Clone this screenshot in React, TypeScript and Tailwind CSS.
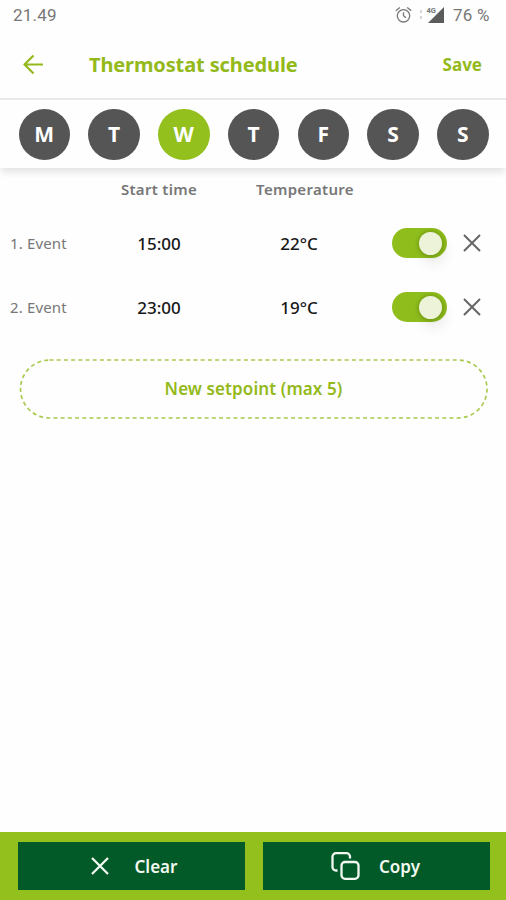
import { useState } from 'react'

interface ScheduleEvent {
  id: number
  time: string
  temperature: string
  enabled: boolean
}

const days = ['M', 'T', 'W', 'T', 'F', 'S', 'S']

const initialEvents: ScheduleEvent[] = [
  { id: 1, time: '15:00', temperature: '22°C', enabled: true },
  { id: 2, time: '23:00', temperature: '19°C', enabled: true }
]

function CrossIcon({ className }: { className: string }) {
  return (
    <svg viewBox="0 0 18 18" fill="none" stroke="currentColor" className={className}>
      <path d="M1 1L17 17M17 1L1 17" />
    </svg>
  )
}

function StatusBar() {
  return (
    <div className="flex h-[30px] shrink-0 items-center justify-between pl-[13px] pr-4 font-[Roboto,sans-serif] text-[17px] leading-[30px] text-[#777777]">
      <span className="tracking-[0.2px]">21.49</span>
      <div className="flex items-center">
        <svg width="18" height="18" viewBox="0 0 18 18" fill="none" stroke="#777777" strokeWidth="1.3">
          <circle cx="8.5" cy="9.8" r="6.2" />
          <path d="M8.5 6.3V9.8L11 11.8M0.8 4.8L4.8 1.5M16.2 4.8L12.2 1.5" />
        </svg>
        <svg width="25" height="18" viewBox="0 0 25 18" className="ml-[6px]">
          <path d="M25 1V17H9Z" fill="#5c5c5c" />
          <path d="M2 4V7M2 10V13" stroke="#cccccc" strokeWidth="1.6" />
          <text x="7.5" y="7" fontSize="7.5" fontWeight="bold" fill="#777777">4G</text>
        </svg>
        <span className="ml-[9px] w-[37px] whitespace-nowrap tracking-[0.2px]">76 %</span>
      </div>
    </div>
  )
}

function Toggle({ enabled, onClick }: { enabled: boolean; onClick: () => void }) {
  return (
    <button
      onClick={onClick}
      aria-label="Toggle event"
      className={`flex h-[30px] w-[55px] items-center rounded-full px-[5px] ${enabled ? 'justify-end bg-[#8fbe1c]' : 'justify-start bg-gray-400'}`}
    >
      <span className="h-[23px] w-[23px] rounded-full bg-[#edf3d9] shadow-[0_0_3px_2px_rgba(70,100,0,0.25),3px_8px_14px_rgba(0,0,0,0.09)]" />
    </button>
  )
}

export default function App() {
  const [selectedDay, setSelectedDay] = useState(2)
  const [events, setEvents] = useState(initialEvents)

  const toggleEvent = (id: number) => {
    setEvents(events.map((e) => (e.id === id ? { ...e, enabled: !e.enabled } : e)))
  }

  const removeEvent = (id: number) => {
    setEvents(events.filter((e) => e.id !== id))
  }

  return (
    <div className="flex h-[900px] w-[506px] flex-col overflow-hidden bg-[#fefefe] font-['Noto_Sans',sans-serif]">
      <StatusBar />

      <header className="flex h-[68px] shrink-0 items-center pl-[23px] pr-6 pt-0.5 text-[#93b91a]">
        <svg width="20" height="20" viewBox="0 0 20 20" fill="none" stroke="currentColor" strokeWidth="2.2">
          <path d="M20 9.5H1.5M10.5 0.5L1.5 9.5L10.5 18.5" />
        </svg>
        <h1 className="ml-[46px] text-[20px] font-bold tracking-[-0.12px]">Thermostat schedule</h1>
        <button className="ml-auto text-[17px] font-bold">Save</button>
      </header>

      <div className="flex h-[70px] shrink-0 items-center justify-between border-t-2 border-[#e9e9e9] pl-[18.5px] pr-[17.5px] pt-px shadow-[0_5px_7px_-1px_rgba(0,0,0,0.11)]">
        {days.map((day, i) => (
          <button
            key={i}
            onClick={() => setSelectedDay(i)}
            className={`h-[51.5px] w-[51.5px] rounded-full pt-px text-[21px] font-bold text-white ${i === selectedDay ? 'bg-[#93c01c]' : 'bg-[#555555]'}`}
          >
            {day}
          </button>
        ))}
      </div>

      <div className="grid h-[43px] shrink-0 grid-cols-[89px_140px_152px_1fr] items-center text-center text-[15px] font-semibold tracking-[0.3px] text-[#777777]">
        <span />
        <span>Start time</span>
        <span>Temperature</span>
      </div>

      {events.map((event, i) => (
        <div key={event.id} className="grid h-16 shrink-0 grid-cols-[89px_140px_140px_23px_68px_1fr] items-center text-[17px] text-[#181818]">
          <span className="pl-[10px] text-[15px] tracking-[0.15px] text-[#777777]">{i + 1}. Event</span>
          <span className="pt-px text-center font-medium">{event.time}</span>
          <span className="pt-px text-center font-medium">{event.temperature}</span>
          <span />
          <Toggle enabled={event.enabled} onClick={() => toggleEvent(event.id)} />
          <button onClick={() => removeEvent(event.id)} aria-label="Remove event" className="pl-[3px]">
            <CrossIcon className="h-[18px] w-[18px] stroke-2 text-[#666666]" />
          </button>
        </div>
      ))}

      <button className="relative ml-[19px] mt-5 h-[60px] w-[469px] shrink-0 text-[17px] font-semibold tracking-[0.1px] text-[#93b91a]">
        <svg className="absolute inset-0" width="469" height="60" fill="none">
          <rect x="1.5" y="1" width="466.5" height="58" rx="29" stroke="#a9c94f" strokeWidth="1.7" strokeDasharray="4 3.2" />
        </svg>
        New setpoint (max 5)
      </button>

      <footer className="mt-auto flex h-[68px] shrink-0 justify-between bg-[#93c01c] pl-[17.5px] pr-4 pt-[10px] text-[17px] font-semibold text-[#f3f8f1]">
        <button className="flex h-12 w-[227px] items-center bg-[#025a28] pl-[73px]">
          <CrossIcon className="h-[18px] w-[18px] stroke-[2.3]" />
          <span className="ml-[26px] pt-px">Clear</span>
        </button>
        <button className="flex h-12 w-[227px] items-center bg-[#025a28] pl-[68px]">
          <svg width="29" height="28" viewBox="0 0 29 28" fill="none" stroke="currentColor" strokeWidth="2.3">
            <path d="M6.5 18.5H5a3.5 3.5 0 0 1-3.5-3.5V4.7a3.5 3.5 0 0 1 3.5-3.5h10.5a3.5 3.5 0 0 1 3.5 3.5v1.8" />
            <rect x="10.5" y="10" width="17" height="16.8" rx="3.5" />
          </svg>
          <span className="ml-[19px] pt-px">Copy</span>
        </button>
      </footer>
    </div>
  )
}
